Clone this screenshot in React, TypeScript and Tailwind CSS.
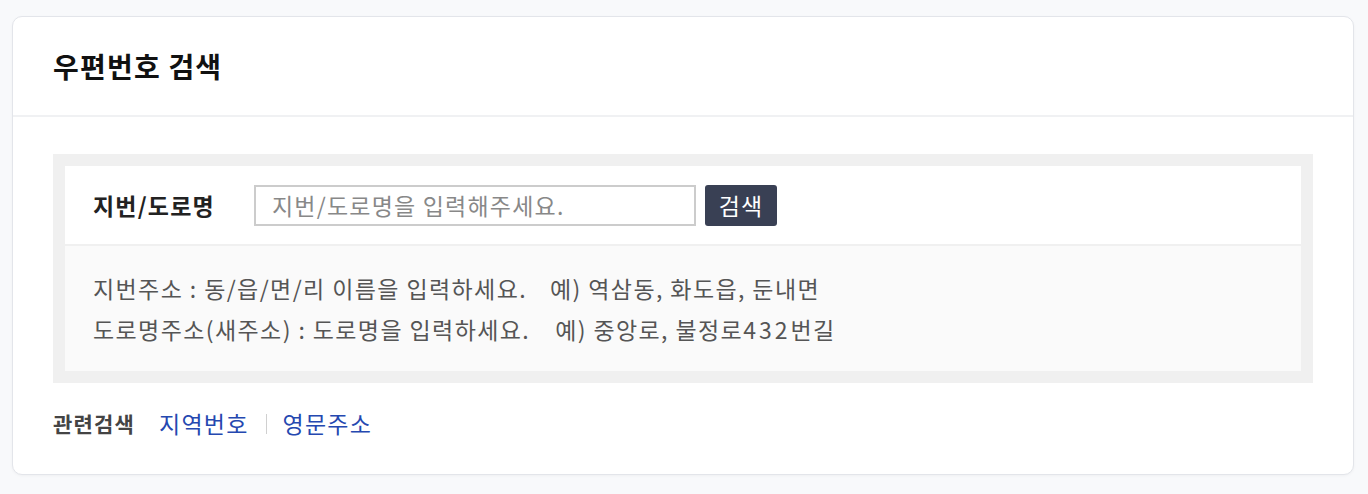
import React from 'react';

const font = { fontFamily: '"Noto Sans CJK KR", "Noto Sans", sans-serif' };

export default function App() {
  return (
    <div className="min-h-[494px] bg-[#f8f9fb] pl-3 pr-[14px] pt-4 pb-5" style={font}>
      <div className="rounded-[10px] border border-[#e3e5ea] bg-white shadow-[0_1px_3px_rgba(0,0,0,0.04)]">
        {/* header */}
        <div className="flex h-[100px] items-center border-b-2 border-[#f0f1f3] px-10">
          <h2 className="text-[28px] font-bold tracking-[1.2px] text-[#111]">우편번호 검색</h2>
        </div>

        {/* search box */}
        <div className="px-10 pt-[37px]">
          <div className="bg-[#f0f0f0] p-3">
            <div className="flex h-[78px] items-center bg-white pl-7">
              <span className="w-[161px] text-[23px] font-bold tracking-[1.2px] text-[#222]">지번/도로명</span>
              <input
                className="h-[41px] w-[442px] border-2 border-[#cccccc] px-4 text-[23px] tracking-[1.2px] text-[#333] outline-none placeholder:text-[#888]"
                placeholder="지번/도로명을 입력해주세요."
              />
              <button className="ml-[9px] h-[41px] w-[72px] rounded-[3px] bg-[#394054] text-[23px] tracking-[1.2px] text-white">
                검색
              </button>
            </div>
            <div className="border-t-2 border-[#f0f0f0] bg-[#fafafa] pl-7 pt-[22px] pb-[21px] text-[23px] leading-[41px] tracking-[1.4px] text-[#555]">
              <p>
                지번주소 : 동/읍/면/리 이름을 입력하세요.<span className="ml-[23px]">예) 역삼동, 화도읍, 둔내면</span>
              </p>
              <p>
                도로명주소(새주소) : 도로명을 입력하세요.<span className="ml-[25px]">예) 중앙로, 불정로<span className="tracking-[3px]">432</span>번길</span>
              </p>
            </div>
          </div>

          {/* related */}
          <div className="flex h-[91px] items-center pb-[10px] tracking-[1.2px]">
            <span className="text-[21px] font-bold text-[#444]">관련검색</span>
            <a className="ml-6 text-[23px] text-[#2548b0]">지역번호</a>
            <span className="ml-[17px] mr-4 h-[20px] w-px bg-[#d0d0d0]" />
            <a className="text-[23px] text-[#2548b0]">영문주소</a>
          </div>
        </div>
      </div>
    </div>
  );
}
